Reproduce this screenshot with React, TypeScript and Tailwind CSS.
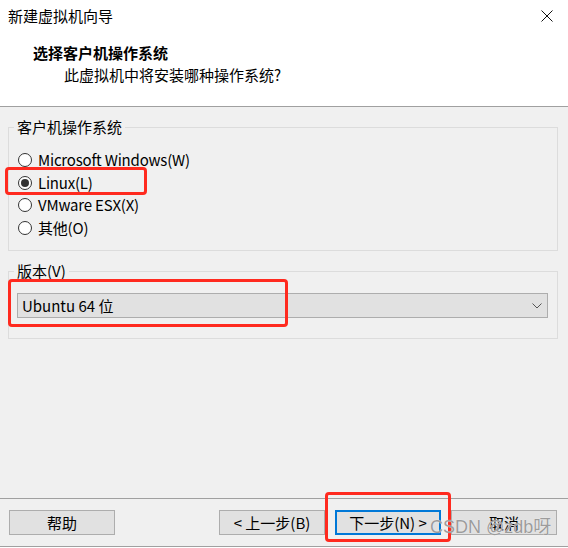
const osOptions = [
  { label: 'Microsoft Windows(W)', checked: false },
  { label: 'Linux(L)', checked: true },
  { label: 'VMware ESX(X)', checked: false },
  { label: '其他(O)', checked: false },
];

function Radio({ checked }: { checked: boolean }) {
  return (
    <span className="w-[14px] h-[14px] rounded-full border border-[#333333] bg-white flex items-center justify-center shrink-0">
      {checked && <span className="w-[8px] h-[8px] rounded-full bg-[#333333]" />}
    </span>
  );
}

function WinButton({ children, primary }: { children: React.ReactNode; primary?: boolean }) {
  return (
    <button
      className={
        primary
          ? 'w-[106px] h-[25px] bg-[#e1e1e1] border-2 border-[#0078d7] text-[15px] leading-[20px] text-black flex items-center justify-center'
          : 'w-[106px] h-[25px] bg-[#e1e1e1] border border-[#adadad] text-[15px] leading-[20px] text-black flex items-center justify-center'
      }
    >
      {children}
    </button>
  );
}

export default function App() {
  return (
    <div className="relative w-[568px] h-[548px] bg-white overflow-hidden font-['Noto_Sans_CJK_SC',sans-serif] text-black">
      <div className="w-[568px] h-[547px] bg-[#f0f0f0] border-b border-[#a0a0a0] flex flex-col">
        {/* Header */}
        <div className="h-[107px] bg-white border-b border-[#a0a0a0] shrink-0">
          <div className="flex items-start justify-between pl-[8px] pt-[6px]">
            <span className="text-[15px] leading-[20px]">新建虚拟机向导</span>
            <svg width="12" height="12" viewBox="0 0 12 12" className="mt-[4px] mr-[15px]">
              <path d="M0.5 0.5 L11.5 11.5 M11.5 0.5 L0.5 11.5" stroke="#111" strokeWidth="1" fill="none" />
            </svg>
          </div>
          <div className="pl-[33px] mt-[17px] text-[15px] leading-[20px] font-bold">选择客户机操作系统</div>
          <div className="pl-[64px] mt-[2px] text-[15px] leading-[20px]">此虚拟机中将安装哪种操作系统?</div>
        </div>

        {/* Guest OS group */}
        <fieldset className="ml-[8px] mt-[10px] w-[550px] border border-[#dcdcdc] pl-[5px] pb-[11px]">
          <legend className="px-[3px] text-[15px] leading-[20px]">客户机操作系统</legend>
          <div className="mt-[12px] flex flex-col">
            {osOptions.map((o) => (
              <div key={o.label} className="h-[22.5px] flex items-center pl-[4px] gap-[6px]">
                <Radio checked={o.checked} />
                <span className="text-[15px] leading-[20px] tracking-[-0.2px]">{o.label}</span>
              </div>
            ))}
          </div>
        </fieldset>

        {/* Version group */}
        <fieldset className="ml-[8px] mt-[10px] w-[550px] border border-[#dcdcdc] pl-[5px] pb-[20px]">
          <legend className="px-[3px] text-[15px] leading-[20px]">版本(V)</legend>
          <div className="ml-[3px] mt-[12px] w-[531px] h-[25px] bg-[#e1e1e1] border border-[#adadad] flex items-center justify-between pl-[4px] pr-[5px]">
            <span className="text-[15px] leading-[20px]">Ubuntu 64 位</span>
            <svg width="10" height="6" viewBox="0 0 10 6">
              <path d="M0.5 0.5 L5 5 L9.5 0.5" stroke="#555" strokeWidth="1" fill="none" />
            </svg>
          </div>
        </fieldset>

        <div className="flex-1" />

        {/* Footer */}
        <div className="border-t border-[#a0a0a0] pt-[11px] pb-[11px] pl-[9px] pr-[11px] flex justify-between">
          <WinButton>帮助</WinButton>
          <div className="flex gap-[10px]">
            <WinButton>&lt; 上一步(B)</WinButton>
            <WinButton primary>下一步(N) &gt;</WinButton>
            <WinButton>取消</WinButton>
          </div>
        </div>
      </div>

      {/* annotation boxes */}
      <div className="absolute left-[5px] top-[167px] w-[142px] h-[28px] border-[3px] border-[#ff2a1f] rounded-[4px]" />
      <div className="absolute left-[8px] top-[279px] w-[280px] h-[48px] border-[3px] border-[#ff2a1f] rounded-[4px]" />
      <div className="absolute left-[325px] top-[492px] w-[126px] h-[50px] border-[3px] border-[#ff2a1f] rounded-[4px]" />

      {/* watermark */}
      <div className="absolute left-[430px] top-[515px] text-[18px] leading-[24px] text-[#9c9c9c] font-['Liberation_Sans','Noto_Sans_CJK_SC',sans-serif] [text-shadow:0_0_1px_#ffffff]">
        CSDN @zdb呀
      </div>
    </div>
  );
}
